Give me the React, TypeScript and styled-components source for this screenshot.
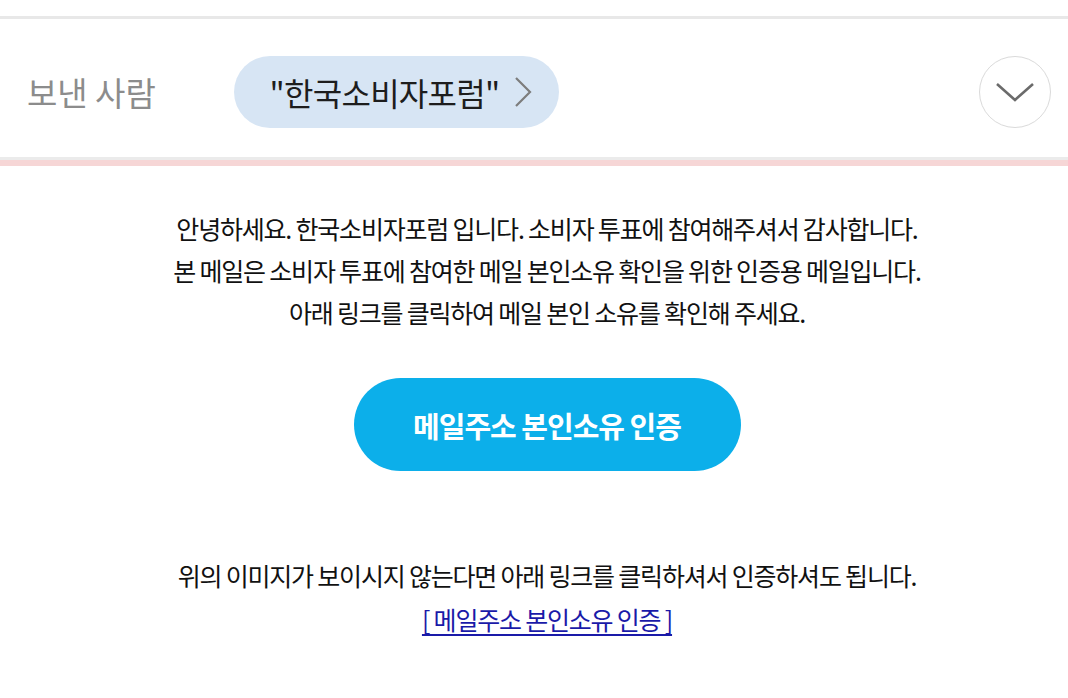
import styled, { createGlobalStyle } from 'styled-components'

const GlobalStyle = createGlobalStyle`
  html, body {
    margin: 0;
    padding: 0;
    background: #ffffff;
  }
  body {
    font-family: 'Noto Sans CJK KR', 'Noto Sans', sans-serif;
    color: #111111;
  }
`

const Page = styled.div`
  width: 1068px;
  height: 698px;
  overflow: hidden;
  display: flex;
  flex-direction: column;
`

const TopGap = styled.div`
  height: 16px;
  border-bottom: 3px solid #e8e8e8;
`

const Header = styled.header`
  height: 141px;
  box-sizing: border-box;
  display: flex;
  align-items: center;
  padding: 8px 17px 0 27px;
  border-bottom: 3px solid #ebebeb;
`

const Divider = styled.div`
  height: 6px;
  background: #f6d6d6;
`

const SenderLabel = styled.span`
  width: 207px;
  font-size: 33px;
  color: #8c8c8c;
  letter-spacing: 0;
`

const SenderPill = styled.button`
  height: 72px;
  width: 325px;
  border: none;
  border-radius: 36px;
  background: #d7e5f4;
  display: flex;
  align-items: center;
  justify-content: center;
  gap: 14px;
  padding: 0 0 0 8px;
  font-family: inherit;
  font-size: 32px;
  color: #1d1d1d;
  letter-spacing: -0.7px;
`

const Spacer = styled.div`
  flex: 1;
`

const ExpandButton = styled.button`
  width: 72px;
  height: 72px;
  border-radius: 50%;
  border: 1px solid #dadada;
  background: #ffffff;
  display: flex;
  align-items: center;
  justify-content: center;
  padding: 0;
`

const Body = styled.main`
  display: flex;
  flex-direction: column;
  align-items: center;
  padding: 41px 0 0 26px;
`

const Message = styled.p`
  margin: 0;
  text-align: center;
  font-size: 25px;
  line-height: 42px;
  letter-spacing: -1.2px;
  color: #111111;
`

const VerifyButton = styled.a`
  margin-top: 45px;
  width: 387px;
  height: 93px;
  flex-shrink: 0;
  border-radius: 47px;
  background: #0cafea;
  color: #ffffff;
  display: flex;
  align-items: center;
  justify-content: center;
  font-size: 29px;
  font-weight: 700;
  letter-spacing: -1px;
  text-decoration: none;
`

const Fallback = styled(Message)`
  margin-top: 82px;
  line-height: 44px;
`

const FallbackLink = styled.a`
  font-size: 25px;
  line-height: 44px;
  letter-spacing: -1.2px;
  color: #1a1aa8;
  text-decoration: underline;
  text-underline-offset: 4px;
`

export default function App() {
  return (
    <Page>
      <GlobalStyle />
      <TopGap />
      <Header>
        <SenderLabel>보낸 사람</SenderLabel>
        <SenderPill>
          <span>"한국소비자포럼"</span>
          <svg width="18" height="32" viewBox="0 0 18 32" fill="none">
            <path d="M2 2 L16 16 L2 30" stroke="#7d7d7d" strokeWidth="2.2" />
          </svg>
        </SenderPill>
        <Spacer />
        <ExpandButton aria-label="펼치기">
          <svg width="40" height="22" viewBox="0 0 40 22" fill="none">
            <path d="M2 3 L20 19 L38 3" stroke="#6b6b6b" strokeWidth="2.6" />
          </svg>
        </ExpandButton>
      </Header>
      <Divider />
      <Body>
        <Message>
          안녕하세요. 한국소비자포럼 입니다. 소비자 투표에 참여해주셔서 감사합니다.
          <br />
          본 메일은 소비자 투표에 참여한 메일 본인소유 확인을 위한 인증용 메일입니다.
          <br />
          아래 링크를 클릭하여 메일 본인 소유를 확인해 주세요.
        </Message>
        <VerifyButton href="#">메일주소 본인소유 인증</VerifyButton>
        <Fallback>위의 이미지가 보이시지 않는다면 아래 링크를 클릭하셔서 인증하셔도 됩니다.</Fallback>
        <FallbackLink href="#">[ 메일주소 본인소유 인증 ]</FallbackLink>
      </Body>
    </Page>
  )
}
